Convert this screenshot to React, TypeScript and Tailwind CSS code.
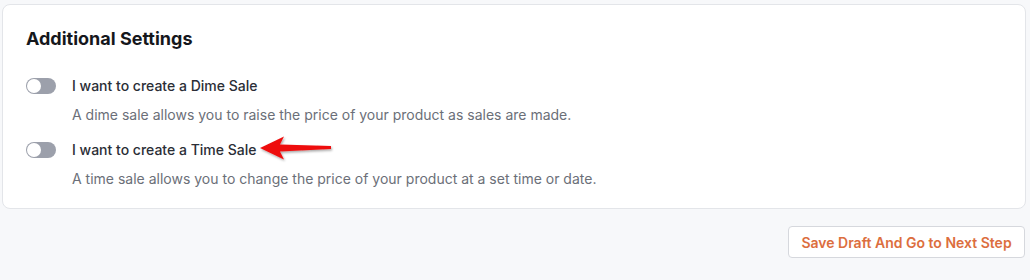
import { useState } from "react";

function Toggle({ on, onChange }: { on: boolean; onChange: () => void }) {
  return (
    <button
      type="button"
      onClick={onChange}
      className={`relative h-[16px] w-[30px] shrink-0 rounded-full ${on ? "bg-[#e0703f]" : "bg-[#9ca0ab]"}`}
    >
      <span
        className={`absolute top-[1px] h-[14px] w-[14px] rounded-full bg-white ${on ? "left-[15px]" : "left-[1px]"}`}
      />
    </button>
  );
}

function RedArrow() {
  return (
    <svg
      width="80"
      height="28"
      viewBox="0 0 80 28"
      className="absolute left-[calc(100%+2px)] top-[-6px]"
    >
      <defs>
        <filter id="sh" x="-20%" y="-40%" width="140%" height="180%">
          <feDropShadow dx="1" dy="1.5" stdDeviation="1.2" floodColor="#000" floodOpacity="0.35" />
        </filter>
      </defs>
      <path
        d="M2 13 L26 1.5 L22 9.5 L73 11 L73 14 L22 16.5 L26 24.5 Z"
        fill="#ee1111"
        filter="url(#sh)"
      />
    </svg>
  );
}

const rows = [
  {
    label: "I want to create a Dime Sale",
    desc: "A dime sale allows you to raise the price of your product as sales are made.",
    arrow: false,
  },
  {
    label: "I want to create a Time Sale",
    desc: "A time sale allows you to change the price of your product at a set time or date.",
    arrow: true,
  },
];

export default function App() {
  const [state, setState] = useState([false, false]);

  return (
    <div className="min-h-[280px] bg-[#f7f8fa] px-[2px] pt-[4px] font-['Inter',sans-serif]">
      <div className="w-[1024px] rounded-lg border border-[#e3e5e9] bg-white px-[23px] pt-[23px] pb-[20px]">
        <h2 className="text-[18px] font-bold leading-[22px] text-[#15171c]">
          Additional Settings
        </h2>
        <div className="mt-[27px] flex flex-col gap-[17px]">
          {rows.map((r, i) => (
            <div key={r.label}>
              <div className="flex items-center gap-[16px]">
                <Toggle
                  on={state[i]}
                  onChange={() => setState((s) => s.map((v, j) => (j === i ? !v : v)))}
                />
                <span className="relative text-[14px] font-medium leading-[18px] text-[#2b2e36]">
                  {r.label}
                  {r.arrow && <RedArrow />}
                </span>
              </div>
              <p className="mt-[11px] pl-[46px] text-[14px] leading-[18px] text-[#6b6f78]">
                {r.desc}
              </p>
            </div>
          ))}
        </div>
      </div>
      <div className="flex justify-end pr-[3px] pt-[17px]">
        <button
          type="button"
          className="h-[32px] w-[237px] rounded border border-[#d6d8dd] bg-white text-[14px] font-semibold text-[#dc6e3e]"
        >
          Save Draft And Go to Next Step
        </button>
      </div>
    </div>
  );
}
